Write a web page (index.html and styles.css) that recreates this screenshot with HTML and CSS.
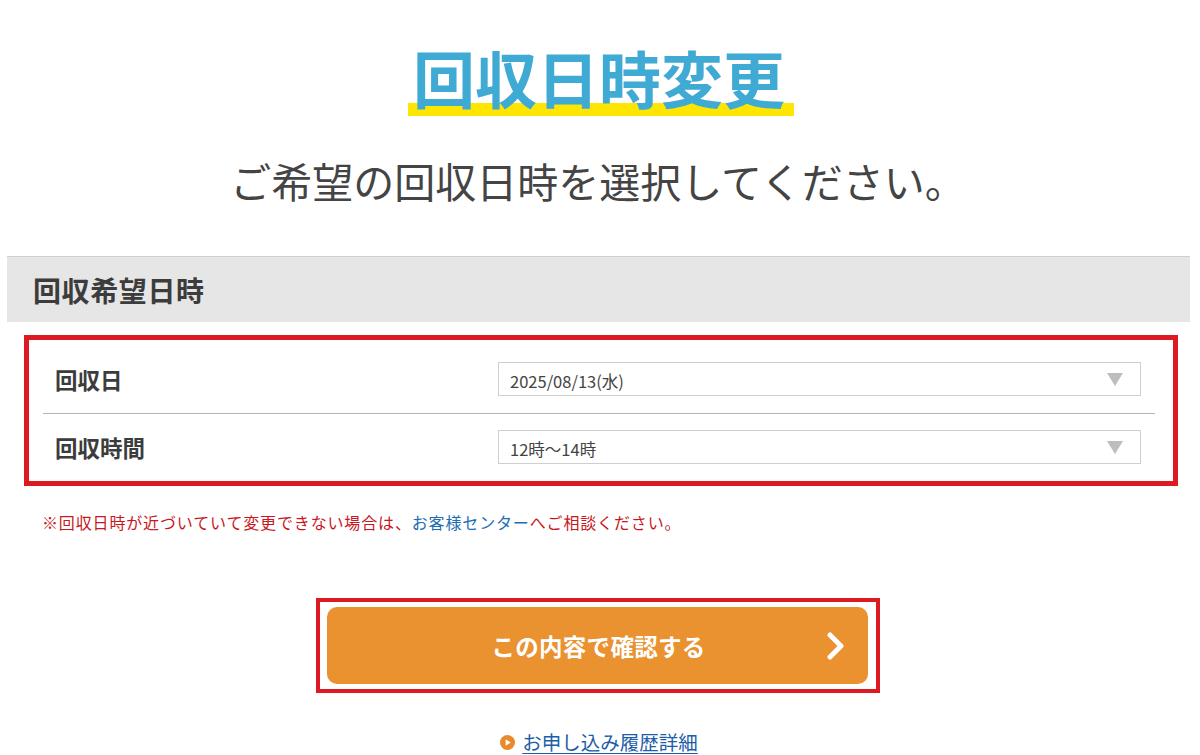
FILE: index.html
```html
<!DOCTYPE html>
<html lang="ja">
<head>
<meta charset="utf-8">
<title>回収日時変更</title>
<link rel="stylesheet" href="styles.css">
</head>
<body>
<div class="page">
  <div class="title-wrap">
    <h1 class="title">回収日時変更</h1>
  </div>
  <p class="lead">ご希望の回収日時を選択してください。</p>

  <div class="section-head">回収希望日時</div>

  <div class="form-box">
    <div class="row first">
      <div class="label">回収日</div>
      <div class="select-wrap">
        <select class="select"><option>2025/08/13(水)</option></select>
      </div>
    </div>
    <div class="row">
      <div class="label">回収時間</div>
      <div class="select-wrap">
        <select class="select"><option>12時～14時</option></select>
      </div>
    </div>
  </div>

  <p class="note"><span class="note-red">※回収日時が近づいていて変更できない場合は、</span><span class="note-blue">お客様センター</span><span class="note-red">へご相談ください。</span></p>

  <div class="btn-area">
    <div class="btn-frame">
      <button class="btn" type="button">
        <span class="btn-text">この内容で確認する</span>
        <svg class="btn-chev" width="22" height="28" viewBox="0 0 22 28"><polyline points="5,3 16,14 5,25" fill="none" stroke="#fff" stroke-width="5" stroke-linecap="round" stroke-linejoin="round"/></svg>
      </button>
    </div>
  </div>

  <div class="link-area">
    <a class="history-link" href="#">
      <svg class="link-icon" width="15" height="15" viewBox="0 0 15 15"><circle cx="7.5" cy="7.5" r="7.5" fill="#e8892b"/><polygon points="5.6,4.2 10.6,7.5 5.6,10.8" fill="#fff"/></svg>
      <span class="link-text">お申し込み履歴詳細</span>
    </a>
  </div>
</div>
</body>
</html>
```

FILE: styles.css
```css
* { box-sizing: border-box; }
html, body {
  margin: 0;
  padding: 0;
  background: #fff;
}
body {
  font-family: "Noto Sans CJK JP", "Noto Sans", sans-serif;
  color: #444;
  width: 1200px;
  height: 755px;
  overflow: hidden;
}
.page {
  width: 1200px;
  padding-top: 46px;
}
.title-wrap {
  display: flex;
  justify-content: center;
}
.title {
  margin: 0;
  margin-left: 2px;
  font-size: 62px;
  line-height: 62px;
  font-weight: 700;
  color: #3faad4;
  padding: 0 9px 8px 5px;
  background: linear-gradient(to top, #ffe600 0, #ffe600 13px, transparent 13px);
}
.lead {
  margin: 40px 0 0;
  text-align: center;
  font-size: 41px;
  line-height: 48px;
  font-weight: 400;
  color: #444;
  padding-right: 4px;
}
.section-head {
  margin: 52px 10px 0 7px;
  height: 66px;
  background: #e6e6e6;
  border-top: 1px solid #cfcfcf;
  padding-left: 26px;
  display: flex;
  align-items: center;
  font-size: 28px;
  letter-spacing: 0.6px;
  font-weight: 700;
  color: #3c3c3c;
}
.form-box {
  margin: 13px 22px 0 24px;
  border: 5px solid #dd1a22;
  padding: 0 18px 0 14px;
}
.row {
  display: flex;
  align-items: center;
  padding: 16px 14px 17px 12px;
}
.row.first {
  padding-top: 22px;
  padding-bottom: 17px;
  border-bottom: 1px solid #b5b5b5;
}
.label {
  width: 443px;
  font-size: 22.5px;
  font-weight: 700;
  color: #3c3c3c;
}
.select-wrap {
  position: relative;
  flex: 1;
}
.select {
  display: block;
  width: 100%;
  height: 34px;
  margin: 0;
  -webkit-appearance: none;
  appearance: none;
  border: 1px solid #cfcfcf;
  border-radius: 0;
  background: #fff;
  padding: 3px 0 0 11px;
  font-family: "Noto Sans CJK JP", "Noto Sans", sans-serif;
  font-size: 16.5px;
  color: #444;
}
.select-wrap::after {
  content: "";
  position: absolute;
  right: 18px;
  top: 11px;
  border-left: 8px solid transparent;
  border-right: 8px solid transparent;
  border-top: 13px solid #bdbdbd;
}
.note {
  margin: 24px 0 0 42px;
  font-size: 16px;
  letter-spacing: 0.85px;
  line-height: 24px;
}
.note-red { color: #c8171e; }
.note-blue { color: #1d6db3; }
.btn-area {
  display: flex;
  justify-content: center;
  margin-top: 64px;
  padding-right: 4px;
}
.btn-frame {
  border: 4px solid #dd1a22;
  padding: 5px 8px 5px 7px;
}
.btn {
  width: 541px;
  height: 77px;
  border: none;
  border-radius: 10px;
  background: #ea9130;
  color: #fff;
  display: flex;
  align-items: center;
  justify-content: center;
  position: relative;
  font-family: "Noto Sans CJK JP", "Noto Sans", sans-serif;
  padding: 0;
  cursor: pointer;
}
.btn-text {
  font-size: 23.5px;
  font-weight: 700;
  letter-spacing: 0.3px;
  padding-left: 2px;
}
.btn-chev {
  position: absolute;
  right: 21px;
  top: 25px;
}
.link-area {
  display: flex;
  justify-content: center;
  margin-top: 36px;
  padding-right: 2px;
}
.history-link {
  display: flex;
  align-items: center;
  gap: 7px;
  text-decoration: none;
}
.link-text {
  font-size: 19.5px;
  line-height: 26px;
  color: #1d5ea8;
  text-decoration: underline;
  text-underline-offset: 3px;
}
```
